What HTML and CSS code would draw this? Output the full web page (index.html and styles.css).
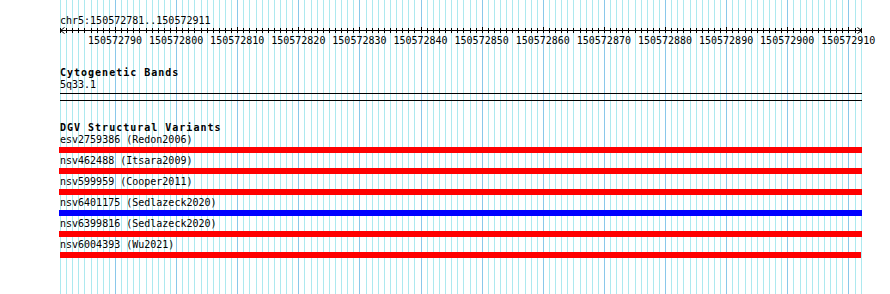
FILE: index.html
```html
<!DOCTYPE html>
<html lang="en">
<head>
    <meta charset="UTF-8">
    <title>chr5:150572781-150572911</title>
    <link rel="stylesheet" href="styles.css">
</head>
<body>

<div class="browser">
    <svg class="guidelines" id="guidelines" width="802" height="294"></svg>

    <div class="track-area">
        <div class="pos-label">chr5:150572781..150572911</div>
        <svg class="ruler" id="ruler" width="802" height="8"></svg>
        <div class="ruler-nums" id="rulerNums">
            <span class="num-lead"></span>
        </div>

        <div class="track-title cyto-title">Cytogenetic Bands</div>
        <div class="band-label">5q33.1</div>
        <div class="band-line"></div>
        <div class="track-sep"></div>

        <div class="track-title dgv-title">DGV Structural Variants</div>
        <div class="sv">
            <div class="sv-name">esv2759386 (Redon2006)</div>
            <div class="sv-bar loss"></div>
        </div>
        <div class="sv">
            <div class="sv-name">nsv462488 (Itsara2009)</div>
            <div class="sv-bar loss"></div>
        </div>
        <div class="sv">
            <div class="sv-name">nsv599959 (Cooper2011)</div>
            <div class="sv-bar loss"></div>
        </div>
        <div class="sv">
            <div class="sv-name">nsv6401175 (Sedlazeck2020)</div>
            <div class="sv-bar gain"></div>
        </div>
        <div class="sv">
            <div class="sv-name">nsv6399816 (Sedlazeck2020)</div>
            <div class="sv-bar loss"></div>
        </div>
        <div class="sv">
            <div class="sv-name">nsv6004393 (Wu2021)</div>
            <div class="sv-bar loss short"></div>
        </div>
    </div>
</div>

<script>
    const NS = "http://www.w3.org/2000/svg";
    const startBase = 150572781;
    const baseCount = 131;
    const pxPerBase = 6.112;

    function addRect(svg, x, y, w, h, cls) {
        const r = document.createElementNS(NS, "rect");
        r.setAttribute("x", x);
        r.setAttribute("y", y);
        r.setAttribute("width", w);
        r.setAttribute("height", h);
        r.setAttribute("class", cls);
        svg.appendChild(r);
    }

    // base guidelines, darker every 10 bases
    const grid = document.getElementById("guidelines");
    for (let i = 0; i <= baseCount; i++) {
        const major = (startBase + i) % 10 === 0;
        addRect(grid, Math.round(i * pxPerBase), 0, 1, 294, major ? "guide major" : "guide");
    }

    // ruler axis + ticks
    const ruler = document.getElementById("ruler");
    addRect(ruler, 0, 3, 802, 1, "axis");
    for (let i = 0; i <= baseCount; i++) {
        const major = (startBase + i) % 10 === 0;
        addRect(ruler, Math.round(i * pxPerBase), major ? 0 : 1, 1, major ? 6 : 5, "axis");
    }
    [["4.5,0.5 0.5,3.5 4.5,6.5"], ["797.5,0.5 801.5,3.5 797.5,6.5"]].forEach(p => {
        const arrow = document.createElementNS(NS, "polyline");
        arrow.setAttribute("points", p[0]);
        arrow.setAttribute("class", "arrow");
        ruler.appendChild(arrow);
    });

    // ruler numbers every 10 bases
    const nums = document.getElementById("rulerNums");
    for (let b = 150572790; b <= 150572910; b += 10) {
        const span = document.createElement("span");
        span.className = "num";
        span.textContent = b;
        nums.appendChild(span);
    }
</script>

</body>
</html>
```

FILE: styles.css
```css
body {
    margin: 0;
    background: #fff;
    color: #000;
    font-family: "DejaVu Sans Mono", "Liberation Mono", monospace;
    font-size: 10px;
}
.browser {
    position: relative;
    height: 294px;
    padding-left: 60px;
    overflow: hidden;
}
.guidelines {
    position: absolute;
    top: 0;
    left: 60px;
    z-index: 0;
}
.guide {
    fill: #ade9ef;
    shape-rendering: crispEdges;
}
.guide.major {
    fill: #8ac8ea;
}
.track-area {
    position: relative;
    z-index: 1;
    width: 802px;
}
.pos-label {
    padding-top: 15px;
    line-height: 12px;
}
.ruler {
    display: block;
    overflow: visible;
}
.axis {
    fill: #000;
    shape-rendering: crispEdges;
}
.arrow {
    fill: none;
    stroke: #000;
    stroke-width: 1;
}
.ruler-nums {
    display: flex;
    line-height: 12px;
    white-space: nowrap;
}
.num-lead {
    flex: 0 0 24.45px;
}
.num {
    flex: 0 0 61.12px;
    text-align: center;
}
.track-title {
    font-weight: bold;
    letter-spacing: 1px;
    line-height: 12px;
}
.cyto-title {
    margin-top: 20px;
}
.band-label {
    line-height: 12px;
}
.band-line {
    margin-top: 2px;
    border-top: 1px solid #000;
}
.track-sep {
    margin-top: 6px;
    border-top: 1px solid #000;
}
.dgv-title {
    margin-top: 21px;
}
.sv {
    padding-bottom: 2px;
}
.sv-name {
    line-height: 12px;
}
.sv-bar {
    width: 803px;
    height: 6px;
    margin: 1px 0 0 -1px;
}
.sv-bar.loss {
    background: #f00;
}
.sv-bar.gain {
    background: #00f;
}
.sv-bar.short {
    width: 801px;
    margin-left: 0;
}
```
